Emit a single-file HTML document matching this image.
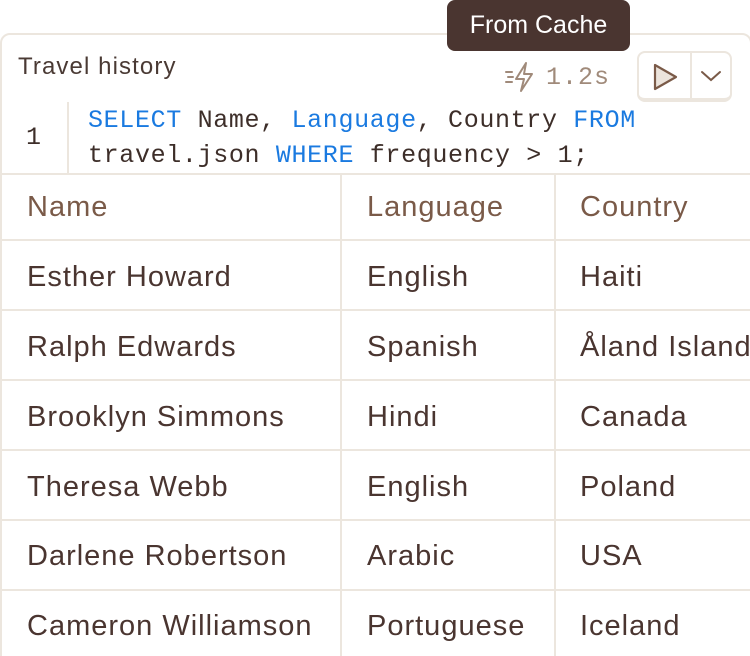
<!DOCTYPE html>
<html><head><meta charset="utf-8"><style>
*{margin:0;padding:0;box-sizing:border-box}
html,body{width:750px;height:656px;overflow:hidden}
body{background:#fff;position:relative;font-family:"Liberation Sans",sans-serif}
.card{position:absolute;left:0;top:33px;width:752px;height:640px;border:2px solid #ece6de;border-radius:10px;background:#fff}
.tip{position:absolute;left:447px;top:0;width:183px;height:51px;background:#4a3530;border-radius:8px;color:#fff;font-size:25px;line-height:51px;text-align:center;z-index:3}
.title{position:absolute;left:18px;top:53px;font-size:24px;letter-spacing:1.1px;color:#4a3a34}
.time{position:absolute;left:504px;top:60px;font-family:"Liberation Mono",monospace;font-size:25px;letter-spacing:1px;color:#a08a7a;display:flex;align-items:center;gap:6px}
.btn{position:absolute;left:637px;top:51px;width:95px;height:51px;border:2px solid #ece6de;border-radius:8px;border-bottom-width:4px;background:#fff}
.btn .div{position:absolute;left:51px;top:0;bottom:0;width:2px;background:#ece6de}
.ln{position:absolute;left:26px;top:123px;font-family:"Liberation Mono",monospace;font-size:25px;color:#3d2e29}
.gut{position:absolute;left:67px;top:102px;width:2px;height:72px;background:#ece6de}
.l{position:absolute;left:88px;white-space:pre;font-family:"Liberation Mono",monospace;font-size:25px;color:#3d2e29;letter-spacing:0.65px}
.k{color:#1a7ae0}
.hl{position:absolute;left:0;width:750px;height:2px;background:#ece6de}
.vl{position:absolute;top:174px;width:2px;height:482px;background:#ece6de}
.c{position:absolute;font-size:29px;color:#4a3530;white-space:nowrap;letter-spacing:1px}
.h{color:#7a5a48}
</style></head><body>
<div class="tip">From Cache</div>
<div class="card"></div>
<div class="title">Travel history</div>
<div class="time"><svg width="36" height="34" viewBox="0 0 36 34" fill="none" stroke="#a08a7a" stroke-width="2" stroke-linejoin="round" stroke-linecap="round"><path d="M2 12h6M4 17h5M2 22h6"/><path d="M22 3L12 19h8l-3 12 11-17h-8z"/></svg>1.2s</div>
<div class="btn"><div class="div"></div>
<svg style="position:absolute;left:12px;top:9px" width="28" height="30" viewBox="0 0 28 30"><path d="M4 3L25 15 4 27z" fill="#ece4dc" stroke="#7a5a48" stroke-width="2.2" stroke-linejoin="round"/></svg>
<svg style="position:absolute;left:61px;top:16px" width="22" height="14" viewBox="0 0 22 14"><path d="M2 3l9 8 9-8" fill="none" stroke="#7a5a48" stroke-width="2" stroke-linecap="round"/></svg>
</div>
<div class="gut"></div>
<div class="ln">1</div>
<div class="l" style="top:106px"><span class="k">SELECT</span> Name, <span class="k">Language</span>, Country <span class="k">FROM</span></div>
<div class="l" style="top:141px">travel.json <span class="k">WHERE</span> frequency &gt; 1;</div>
<div class="hl" style="top:173px"></div>
<div class="hl" style="top:239px"></div>
<div class="hl" style="top:309px"></div>
<div class="hl" style="top:379px"></div>
<div class="hl" style="top:449px"></div>
<div class="hl" style="top:519px"></div>
<div class="hl" style="top:589px"></div>
<div class="vl" style="left:340px"></div>
<div class="vl" style="left:554px"></div>
<div class="c h" style="left:27px;top:191px">Name</div>
<div class="c h" style="left:367px;top:191px">Language</div>
<div class="c h" style="left:580px;top:191px">Country</div>

<div class="c" style="left:27px;top:261px">Esther Howard</div>
<div class="c" style="left:367px;top:261px">English</div>
<div class="c" style="left:580px;top:261px">Haiti</div>

<div class="c" style="left:27px;top:331px">Ralph Edwards</div>
<div class="c" style="left:367px;top:331px">Spanish</div>
<div class="c" style="left:580px;top:331px">Åland Islands</div>

<div class="c" style="left:27px;top:401px">Brooklyn Simmons</div>
<div class="c" style="left:367px;top:401px">Hindi</div>
<div class="c" style="left:580px;top:401px">Canada</div>

<div class="c" style="left:27px;top:471px">Theresa Webb</div>
<div class="c" style="left:367px;top:471px">English</div>
<div class="c" style="left:580px;top:471px">Poland</div>

<div class="c" style="left:27px;top:540px">Darlene Robertson</div>
<div class="c" style="left:367px;top:540px">Arabic</div>
<div class="c" style="left:580px;top:540px">USA</div>

<div class="c" style="left:27px;top:610px">Cameron Williamson</div>
<div class="c" style="left:367px;top:610px">Portuguese</div>
<div class="c" style="left:580px;top:610px">Iceland</div>
</body></html>
